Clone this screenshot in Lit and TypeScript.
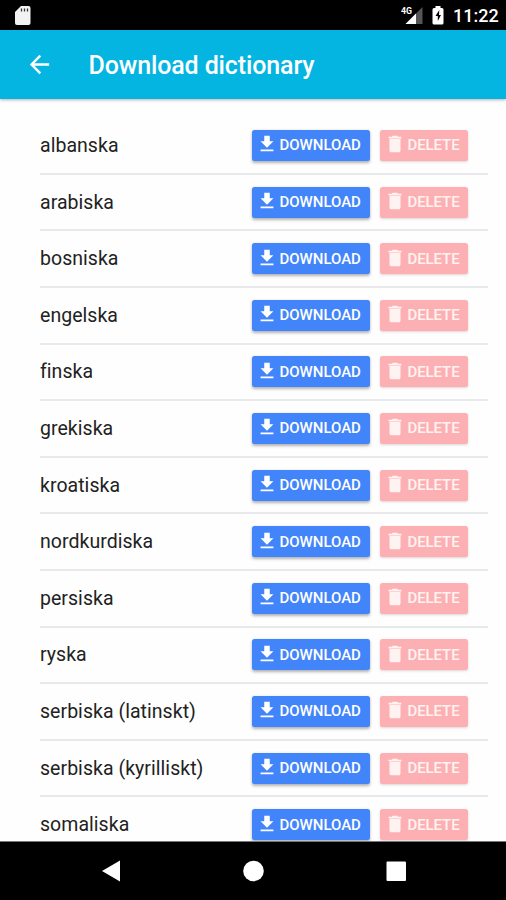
import { LitElement, html, css, svg } from "lit";
import { customElement } from "lit/decorators.js";

const LANGUAGES = [
  "albanska", "arabiska", "bosniska", "engelska", "finska", "grekiska", "kroatiska",
  "nordkurdiska", "persiska", "ryska", "serbiska (latinskt)", "serbiska (kyrilliskt)", "somaliska",
];

const ICONS = {
  download: "M19 9h-4V3H9v6H5l7 7 7-7zM5 18v2h14v-2H5z",
  delete: "M6 19c0 1.1.9 2 2 2h8c1.100 0 2-.9 2-2V6.500H6v12.500zM19 4h-3.500l-1-1h-5l-1 1H5v2h14V4z",
  back: "M20 11H7.830l5.590-5.590L12 4l-8 8 8 8 1.410-1.410L7.830 13H20v-2z",
};

@customElement("status-bar")
class StatusBar extends LitElement {
  static styles = css`
    :host { display: flex; align-items: center; height: 30px; flex: none; background: #000; color: #fff; padding: 0 9px 0 14px; box-sizing: border-box; }
    svg { display: block; flex: none; }
    .spacer { flex: 1; }
    .signal { margin-right: 9px; }
    .battery { margin-right: 9px; }
    .net { font: 700 9px Roboto, sans-serif; fill: #fff; }
    .time { font: 500 18px/30px Roboto, sans-serif; width: 44px; white-space: nowrap; padding-top: 1px; box-sizing: border-box; height: 30px; }
  `;
  render() {
    return html`
      <svg width="18" height="30" viewBox="0 0 18 30">
        <path d="M7 6h7.500q2 0 2 2v15q0 2-2 2H3q-2 0-2-2V12z" fill="#f2f2f2" />
        <path d="M7.500 8.500v3M10.500 8.500v3M13.500 8.500v3" stroke="#333" stroke-width="1.300" />
      </svg>
      <span class="spacer"></span>
      <svg class="signal" width="22" height="30" viewBox="0 0 22 30">
        <path d="M21.500 7v17H4.500z" fill="#555" />
        <path d="M15 13.500v10.500H4.500z" fill="#fff" />
        <text class="net" x="0" y="13.500" textLength="11" lengthAdjust="spacingAndGlyphs">4G</text>
      </svg>
      <svg class="battery" width="12" height="30" viewBox="0 0 12 30">
        <path d="M3.500 6h5v2H10q1.500 0 1.500 1.500v13.500q0 1.500-1.500 1.500H2Q.5 24.500.5 23V9.500Q.5 8 2 8h1.500z" fill="#fff" />
        <path d="M7.300 10L3.500 16h2.300v5L9 15H7z" fill="#000" />
      </svg>
      <span class="time">11:22</span>`;
  }
}

@customElement("raised-button")
class RaisedButton extends LitElement {
  static properties = { kind: { type: String } };
  declare kind: "download" | "delete";
  static styles = css`
    :host { display: block; flex: none; }
    button { display: flex; align-items: center; width: 118.500px; height: 31px; margin: 0; padding: 0 0 0 4px; border: 0; border-radius: 2.500px; background: #4285fa; color: #fff; box-shadow: 0 1.500px 3px rgba(0, 0, 0, .3); font: 500 15px/31px Roboto, sans-serif; white-space: nowrap; }
    button.delete { width: 88.500px; background: #fdb0b3; color: #fff3f2; box-shadow: 0 1px 2.500px rgba(120, 60, 60, .22); }
    svg { display: block; width: 22px; height: 22px; margin: -2px 2px 0 0; flex: none; fill: currentColor; }
    span { letter-spacing: -.02px; padding-top: 1px; }
    .delete span { letter-spacing: -.1px; }
  `;
  render() {
    return html`<button class=${this.kind}>
      <svg viewBox="0 0 24 24">${svg`<path d=${ICONS[this.kind]} />`}</svg><span>${this.kind.toUpperCase()}</span>
    </button>`;
  }
}

@customElement("app-root")
class AppRoot extends LitElement {
  static styles = css`
    :host { display: flex; flex-direction: column; width: 506px; height: 900px; overflow: hidden; background: #fefefe; font-family: Roboto, sans-serif; }
    header { display: flex; align-items: center; flex: none; height: 69px; padding-left: 25px; box-sizing: border-box; background: #04b4e1; color: #fff; box-shadow: 0 1px 3px rgba(0, 0, 0, .3); z-index: 1; }
    header svg { width: 29px; height: 29px; margin-right: 34.500px; fill: #fff; }
    h1 { margin: 0; font-size: 25px; line-height: 30px; font-weight: 500; white-space: nowrap; letter-spacing: -.13px; padding-top: 2px; }
    main { flex: 1; min-height: 0; overflow: hidden; padding: 19.200px 18px 0 40px; }
    .row { display: flex; align-items: center; box-sizing: border-box; height: 56.600px; border-bottom: 2px solid #e8e9ea; padding-right: 20px; gap: 9.500px; }
    .name { flex: 1; font-size: 19.500px; line-height: 28px; color: #222; white-space: nowrap; letter-spacing: .04px; padding-top: 1px; }
    nav { display: flex; flex: none; height: 59px; box-sizing: border-box; border-top: 1px solid #777; background: #000; justify-content: center; align-items: center; z-index: 1; }
    nav svg { width: 506px; height: 58px; fill: #fff; }
  `;
  render() {
    return html`
      <status-bar></status-bar>
      <header>
        <svg viewBox="0 0 24 24"><path d=${ICONS.back} /></svg>
        <h1>Download dictionary</h1>
      </header>
      <main>
        ${LANGUAGES.map((name) => html`<div class="row">
          <span class="name">${name}</span>
          <raised-button .kind=${"download"}></raised-button>
          <raised-button .kind=${"delete"}></raised-button>
        </div>`)}
      </main>
      <nav>
        <svg viewBox="0 0 506 58">
          <path d="M102 29L120 18.500v21z" />
          <circle cx="253.500" cy="29" r="10.300" />
          <rect x="386.500" y="19.500" width="19.500" height="19.500" rx="1" />
        </svg>
      </nav>`;
  }
}
